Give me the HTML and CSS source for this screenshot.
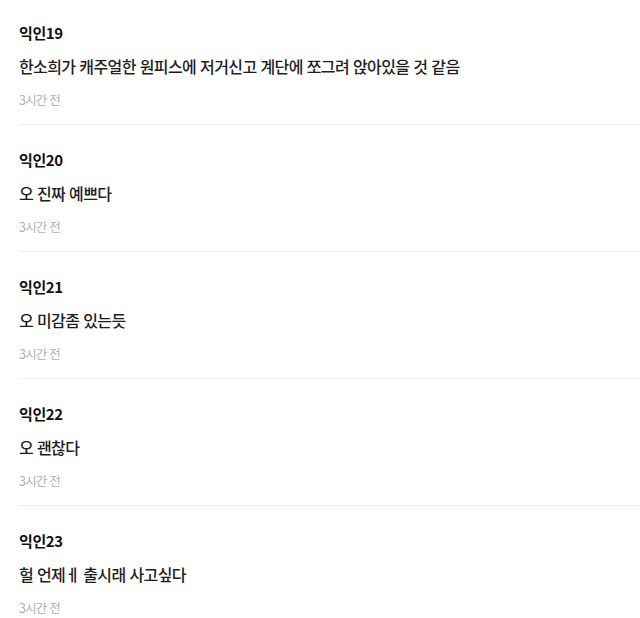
FILE: index.html
```html
<!DOCTYPE html>
<html lang="ko">
<head>
<meta charset="utf-8">
<link rel="stylesheet" href="styles.css">
</head>
<body>
<div class="list">
  <div class="item">
    <div class="name">익인19</div>
    <div class="text">한소희가 캐주얼한 원피스에 저거신고 계단에 쪼그려 앉아있을 것 같음</div>
    <div class="time">3시간 전</div>
  </div>
  <div class="item">
    <div class="name">익인20</div>
    <div class="text">오 진짜 예쁘다</div>
    <div class="time">3시간 전</div>
  </div>
  <div class="item">
    <div class="name">익인21</div>
    <div class="text">오 미감좀 있는듯</div>
    <div class="time">3시간 전</div>
  </div>
  <div class="item">
    <div class="name">익인22</div>
    <div class="text">오 괜찮다</div>
    <div class="time">3시간 전</div>
  </div>
  <div class="item">
    <div class="name">익인23</div>
    <div class="text">헐 언제ㅔ 출시래 사고싶다</div>
    <div class="time">3시간 전</div>
  </div>
</div>
</body>
</html>
```
FILE: styles.css
```css
html, body {
  margin: 0;
  padding: 0;
  background: #fff;
}
body {
  font-family: "Noto Sans CJK KR", "Noto Sans", sans-serif;
  width: 640px;
  height: 618px;
  overflow: hidden;
}
.list {
  display: flex;
  flex-direction: column;
  padding-left: 19px;
}
.item {
  display: flex;
  flex-direction: column;
  padding-top: 25px;
  padding-bottom: 15px;
  border-bottom: 1px solid #ededed;
}
.item:first-child {
  padding-top: 23px;
}
.name {
  font-size: 15px;
  font-weight: 700;
  line-height: 20px;
  color: #111;
  letter-spacing: -0.4px;
}
.text {
  margin-top: 12px;
  font-size: 16px;
  font-weight: 500;
  line-height: 22px;
  color: #1e1e1e;
  letter-spacing: -0.6px;
}
.time {
  margin-top: 14px;
  font-size: 12.5px;
  line-height: 18px;
  color: #b0b0b0;
  letter-spacing: -0.8px;
}
```
